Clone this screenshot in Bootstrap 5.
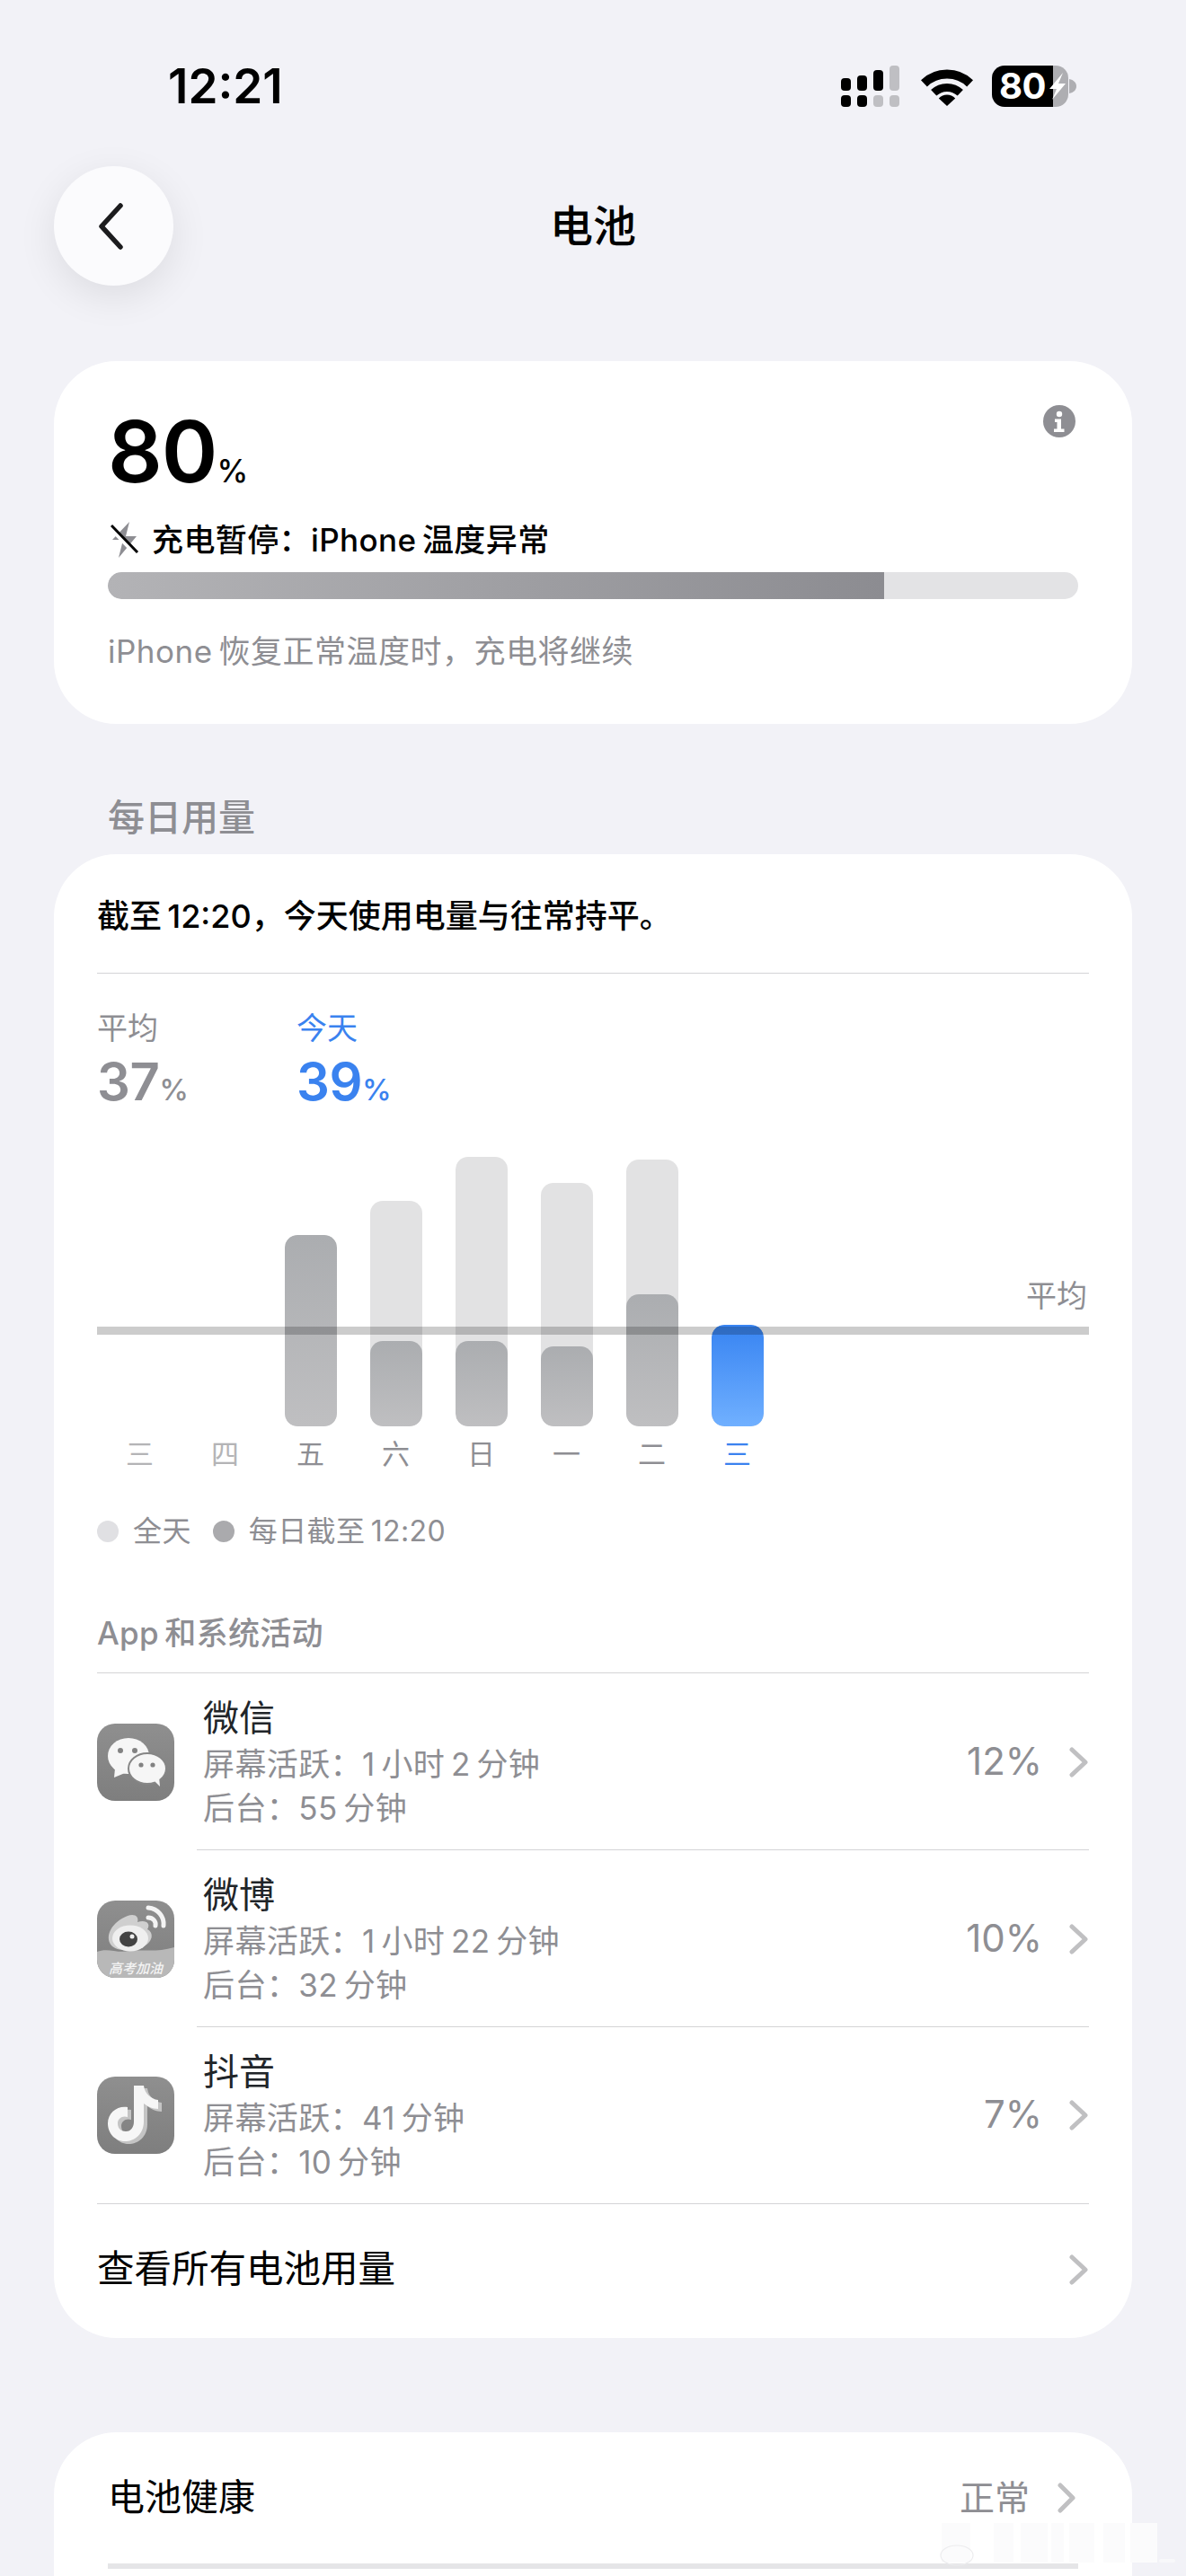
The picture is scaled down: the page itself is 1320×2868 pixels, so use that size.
<!doctype html>
<html lang="zh">
<head>
<meta charset="utf-8">
<title>电池</title>
<link href="https://cdn.jsdelivr.net/npm/bootstrap@5.3.0/dist/css/bootstrap.min.css" rel="stylesheet">
<style>
html,body{height:2868px;overflow:hidden}
body{background:#f2f2f7;color:#000;font-family:"Inter","Noto Sans CJK SC",sans-serif;font-size:34px;position:relative}
.page{padding:0 60px}
.gr{color:#8e8e93}
.status-row{height:185px;margin:0 -60px;padding:73px 122px 0 187px}
.clock{font-size:53px;font-weight:600;line-height:46px}
.sig{flex:none;display:block}
.wifi{flex:none;display:block;margin:2px 21px 0 23px}
.batt{width:85px;height:46px;border-radius:14px;background:linear-gradient(90deg,#000 80%,#aeaeb2 80%);color:#fff;font-size:40px;font-weight:700;line-height:46px;padding-left:8px;letter-spacing:-.5px}
.batt svg{margin-left:4px;flex:none}
.nub{margin-left:1px}
.navbar-row{display:grid;grid-template-columns:133px 1fr 133px;align-items:center;height:133px;margin-bottom:84px}
.back{width:133px;height:133px;border-radius:50%;background:#fbfbfd;box-shadow:0 12px 44px rgba(0,0,0,.09);border:0;padding:0}
.back svg{margin-left:47px}
.ttl{font-size:48px;font-weight:500;line-height:1;text-align:center;margin:0}
.sheet{--bs-card-border-radius:70px;--bs-card-inner-border-radius:70px;--bs-card-border-width:0;--bs-card-bg:#fff;--bs-card-border-color:transparent}
.s1{height:404px;padding:53px 60px 0}
.big{font-size:95px;font-weight:600;line-height:95px;letter-spacing:-1px}
.big small{font-size:35px;font-weight:500;letter-spacing:0}
.info{display:block;flex:none;margin:-4px 3px 0 0}
.chg{height:44px;margin-top:7px;font-size:35px;font-weight:500;line-height:44px;gap:14px;letter-spacing:.4px}
.chg svg{display:block;flex:none;margin-left:3px}
.trk{height:30px;margin-top:14px;--bs-progress-bg:#e3e3e5;--bs-progress-border-radius:15px}
.trk .progress-bar{width:80%;background:linear-gradient(90deg,#b3b3b6,#8c8c91);border-radius:15px 0 0 15px}
.hint{font-size:35px;line-height:44px;margin-top:36px;letter-spacing:.5px}
.sec{font-size:41px;font-weight:500;line-height:50px;margin:79px 0 0 60px;height:66px}
.s2{height:1652px;padding:0 48px}
.sum{height:133px;font-size:36px;font-weight:500;line-height:1;border-bottom:1.5px solid #d4d4d6;padding-top:6px}
.stats{padding-top:40px;height:204px}
.stat{width:222px}
.stat .lb{font-size:34px;line-height:42px}
.stat .vl{font-size:58px;font-weight:600;line-height:62px;margin-top:7px;letter-spacing:-.5px}
.stat .vl small{font-size:33px;font-weight:500}
.bl{color:#3a82ef}
.plot{height:300px}
.pcol{width:95px}
.pill{width:58px;border-radius:14px;background:#e2e2e3;overflow:hidden}
.pill .fillb{border-radius:14px;background:linear-gradient(#abadb0,#bfbfc1)}
.pill .fillb.bl2{background:linear-gradient(#3884f2,#70b0ff)}
.avgline{position:absolute;left:0;right:0;top:189px;height:9px;background:rgba(0,0,0,.2)}
.avglb{position:absolute;right:2px;top:135px;font-size:34px;line-height:40px}
.days{height:60px;font-size:31px;line-height:60px;padding-top:1px}
.days>div{width:95px;text-align:center}
.li{color:#b4b4b6}
.legend{margin-top:35px;height:44px;font-size:32px;line-height:44px;letter-spacing:.4px}
.dot{width:24px;height:24px;border-radius:50%;margin-right:16px}
.d1{background:#e0e0e3}.d2{background:#aaaaad;margin-left:24px}
.apph{font-size:35px;font-weight:500;line-height:44px;margin-top:69px;padding-bottom:22px;border-bottom:1.5px solid #d4d4d6;letter-spacing:.3px}
.aplist{--bs-list-group-bg:transparent;--bs-list-group-border-width:0;--bs-list-group-item-padding-x:0;--bs-list-group-item-padding-y:0}
.aprow{height:197px;border-bottom:1.5px solid #d4d4d6!important;position:relative}
.aprow.ind{border-bottom:0!important}
.aprow.ind::after{content:"";position:absolute;left:111px;right:0;bottom:0;border-bottom:1.5px solid #d4d4d6}
.ic{width:86px;height:86px;flex:none;margin-right:32px;display:block}
.txts{padding-top:4px}
.nm{font-size:40px;line-height:48px;margin-bottom:3px}
.sb{font-size:35px;line-height:49px;letter-spacing:.4px}
.pct{font-size:42px;line-height:1;margin-right:30px;margin-bottom:2px}
.chev{flex:none;display:block}
.allrow{height:145px;font-size:41.500px}
.s3{height:400px;margin-top:105px;padding:0 60px}
.hrow{height:152px;font-size:41px;border-bottom:6px solid #e5e5e7;padding-right:3px}
.hrow .st{font-size:39px;margin-right:31px}
.wm{position:absolute;left:1040px;top:2805px;pointer-events:none}
</style>
</head>
<body>
<div class="page">
  <div class="status-row d-flex justify-content-between">
    <div class="clock">12:21</div>
    <div class="d-flex align-items-start">
      <svg width="66" height="46" viewBox="0 0 66 46" class="sig">
        <g fill="#000"><rect x="0" y="14" width="11" height="14" rx="4"/><rect x="18" y="11" width="11" height="17" rx="4"/><rect x="36" y="5" width="11" height="23" rx="4"/><rect x="0" y="33" width="11" height="13" rx="4"/><rect x="18" y="33" width="11" height="13" rx="4"/></g>
        <g fill="#bfbfc3"><rect x="54" y="0" width="11" height="28" rx="4"/><rect x="36" y="33" width="11" height="13" rx="4"/><rect x="54" y="33" width="11" height="13" rx="4"/></g>
      </svg>
      <svg width="58" height="46" viewBox="0 0 58 46" class="wifi">
        <path d="M29 43 19.8 34.4A13 13 0 0 1 38.2 34.4Z" fill="#000"/>
        <path d="M14.2 28.3A21.5 21.5 0 0 1 43.8 28.3" fill="none" stroke="#000" stroke-width="9"/>
        <path d="M3.4 17.9A37 37 0 0 1 54.6 17.9" fill="none" stroke="#000" stroke-width="10"/>
      </svg>
      <div class="d-flex align-items-center">
        <div class="batt d-flex align-items-center">80<svg width="18" height="30" viewBox="0 0 18 30"><path d="M15 0 0 18H8L3 30 18 12H10Z" fill="#fff"/></svg></div>
        <svg width="8" height="16" viewBox="0 0 8 16" class="nub"><path d="M0 0C5 1 8 4 8 8S5 15 0 16Z" fill="#aeaeb2"/></svg>
      </div>
    </div>
  </div>

  <div class="navbar-row">
    <button class="back d-flex align-items-center" type="button" aria-label="返回">
      <svg width="32" height="52" viewBox="0 0 32 52" class="chev"><path d="M27 3 6 26 27 49" fill="none" stroke="#1c1c1e" stroke-width="5.5" stroke-linecap="round" stroke-linejoin="round"/></svg>
    </button>
    <h1 class="ttl">电池</h1>
    <div></div>
  </div>

  <section class="card sheet s1">
    <div class="d-flex justify-content-between align-items-start">
      <div class="big">80<small>%</small></div>
      <svg width="36" height="36" viewBox="0 0 36 36" class="info"><circle cx="18" cy="18" r="18" fill="#8e8e93"/><circle cx="18" cy="10" r="3.2" fill="#fff"/><path d="M13 15.5h7v11h3.5v3.5H12v-3.5h3.5v-7.500H13Z" fill="#fff"/></svg>
    </div>
    <div class="chg d-flex align-items-center">
      <svg width="32" height="42" viewBox="13 12 32 42"><path d="M34 13 15 33H27L22 53 42 29H30Z" fill="#8e8e93"/><path d="M13 19 42 49" stroke="#fff" stroke-width="6"/><path d="M14 17 43 47" stroke="#000" stroke-width="3"/></svg>
      <span>充电暂停：iPhone&#8201;温度异常</span>
    </div>
    <div class="progress trk" role="progressbar" aria-valuenow="80" aria-valuemin="0" aria-valuemax="100"><div class="progress-bar"></div></div>
    <div class="hint gr">iPhone&#8201;恢复正常温度时，充电将继续</div>
  </section>

  <h2 class="sec gr">每日用量</h2>

  <section class="card sheet s2">
    <div class="sum d-flex align-items-center">截至&#8201;12:20，今天使用电量与往常持平。</div>
    <div class="stats d-flex">
      <div class="stat gr"><div class="lb">平均</div><div class="vl">37<small>%</small></div></div>
      <div class="stat bl"><div class="lb">今天</div><div class="vl">39<small>%</small></div></div>
    </div>
    <div class="plot position-relative d-flex align-items-end">
      <div class="pcol"></div><div class="pcol"></div>
      <div class="pcol d-flex justify-content-center"><div class="pill d-flex flex-column justify-content-end" style="height:213px"><div class="fillb" style="height:213px"></div></div></div>
      <div class="pcol d-flex justify-content-center"><div class="pill d-flex flex-column justify-content-end" style="height:251px"><div class="fillb" style="height:95px"></div></div></div>
      <div class="pcol d-flex justify-content-center"><div class="pill d-flex flex-column justify-content-end" style="height:300px"><div class="fillb" style="height:95px"></div></div></div>
      <div class="pcol d-flex justify-content-center"><div class="pill d-flex flex-column justify-content-end" style="height:271px"><div class="fillb" style="height:89px"></div></div></div>
      <div class="pcol d-flex justify-content-center"><div class="pill d-flex flex-column justify-content-end" style="height:297px"><div class="fillb" style="height:147px"></div></div></div>
      <div class="pcol d-flex justify-content-center"><div class="pill d-flex flex-column justify-content-end" style="height:113px"><div class="fillb bl2" style="height:113px"></div></div></div>
      <div class="avgline"></div>
      <div class="avglb gr">平均</div>
    </div>
    <div class="days d-flex">
      <div class="li">三</div><div class="li">四</div><div class="gr">五</div><div class="gr">六</div><div class="gr">日</div><div class="gr">一</div><div class="gr">二</div><div class="bl">三</div>
    </div>
    <div class="legend d-flex align-items-center gr">
      <span class="dot d1"></span><span>全天</span><span class="dot d2"></span><span>每日截至&#8201;12:20</span>
    </div>
    <div class="apph gr">App&#8201;和系统活动</div>
    <div class="list-group list-group-flush aplist">
      <div class="list-group-item aprow ind d-flex align-items-center">
        <svg class="ic" viewBox="0 0 86 86"><defs><linearGradient id="g1" x1="0" y1="0" x2="0" y2="1"><stop offset="0" stop-color="#8f8f8f"/><stop offset="1" stop-color="#7e7e7e"/></linearGradient></defs><rect width="86" height="86" rx="20" fill="url(#g1)"/><ellipse cx="35" cy="36" rx="23" ry="20" fill="#f6f6f6"/><path d="M20 50l-1 10 12-5Z" fill="#f6f6f6"/><ellipse cx="56" cy="50" rx="21" ry="17" fill="#f6f6f6" stroke="#868686" stroke-width="2"/><path d="M63 63l7 7-1-11Z" fill="#f6f6f6"/><circle cx="26" cy="30" r="3" fill="#828282"/><circle cx="42" cy="30" r="3" fill="#828282"/><circle cx="49" cy="46" r="2.6" fill="#828282"/><circle cx="62" cy="46" r="2.6" fill="#828282"/></svg>
        <div class="flex-grow-1 txts"><div class="nm">微信</div><div class="sb gr">屏幕活跃：1&#8201;小时&#8201;2&#8201;分钟</div><div class="sb gr">后台：55&#8201;分钟</div></div>
        <div class="pct gr">12%</div>
        <svg width="22" height="34" viewBox="0 0 22 34" class="chev"><path d="M3 3 18 17 3 31" fill="none" stroke="#c0c0c2" stroke-width="5" stroke-linecap="round" stroke-linejoin="round"/></svg>
      </div>
      <div class="list-group-item aprow ind d-flex align-items-center">
        <svg class="ic" viewBox="0 0 86 86"><rect width="86" height="86" rx="20" fill="url(#g1)"/><path d="M0 57C12 52 22 59 36 56 50 54 66 58 86 52V66A20 20 0 0 1 66 86H20A20 20 0 0 1 0 66Z" fill="#b8b8b8"/><path d="M16 50C8 40 16 24 34 17 42 14 47 18 45 24 55 21 60 26 56 32 64 36 62 47 50 52 36 57 22 56 16 50Z" fill="#cfcfcf"/><ellipse cx="37" cy="42" rx="20" ry="14.500" fill="#efefef"/><ellipse cx="35" cy="43" rx="10" ry="8.500" fill="#444"/><circle cx="39" cy="40" r="2.500" fill="#eee"/><path d="M57 8C68 9 75 18 74 28M57 19C62 19 66 23 65 28" fill="none" stroke="#f4f4f4" stroke-width="5" stroke-linecap="round"/><text x="43" y="81" text-anchor="middle" font-family="Noto Sans CJK SC,sans-serif" font-size="15" font-weight="500" font-style="italic" fill="#f4f4f4">高考加油</text></svg>
        <div class="flex-grow-1 txts"><div class="nm">微博</div><div class="sb gr">屏幕活跃：1&#8201;小时&#8201;22&#8201;分钟</div><div class="sb gr">后台：32&#8201;分钟</div></div>
        <div class="pct gr">10%</div>
        <svg width="22" height="34" viewBox="0 0 22 34" class="chev"><path d="M3 3 18 17 3 31" fill="none" stroke="#c0c0c2" stroke-width="5" stroke-linecap="round" stroke-linejoin="round"/></svg>
      </div>
      <div class="list-group-item aprow d-flex align-items-center">
        <svg class="ic" viewBox="0 0 86 86"><rect width="86" height="86" rx="20" fill="url(#g1)"/><defs><path id="nt" d="M41 10H52C53 19 60 25 68 26V36C62 36 56 33 52 30V50C52 64 42 72 31 72 20 72 12 63 12 52 12 40 23 32 34 34V45C28 43 23 47 23 52 23 58 27 61 32 61 38 61 41 56 41 50Z"/></defs><use href="#nt" x="4" y="3" fill="#c4c4c4"/><use href="#nt" fill="#f6f6f6"/></svg>
        <div class="flex-grow-1 txts"><div class="nm">抖音</div><div class="sb gr">屏幕活跃：41&#8201;分钟</div><div class="sb gr">后台：10&#8201;分钟</div></div>
        <div class="pct gr">7%</div>
        <svg width="22" height="34" viewBox="0 0 22 34" class="chev"><path d="M3 3 18 17 3 31" fill="none" stroke="#c0c0c2" stroke-width="5" stroke-linecap="round" stroke-linejoin="round"/></svg>
      </div>
    </div>
    <div class="allrow d-flex align-items-center justify-content-between">
      <span>查看所有电池用量</span>
      <svg width="22" height="34" viewBox="0 0 22 34" class="chev"><path d="M3 3 18 17 3 31" fill="none" stroke="#c0c0c2" stroke-width="5" stroke-linecap="round" stroke-linejoin="round"/></svg>
    </div>
  </section>

  <section class="card sheet s3">
    <div class="hrow d-flex align-items-center">
      <span class="flex-grow-1">电池健康</span>
      <span class="st gr">正常</span>
      <svg width="20" height="34" viewBox="0 0 20 34" class="chev"><path d="M3 3 17 17 3 31" fill="none" stroke="#c0c0c2" stroke-width="5" stroke-linecap="round" stroke-linejoin="round"/></svg>
    </div>
  </section>
</div>
<svg class="wm" width="280" height="56" viewBox="0 0 280 56" aria-hidden="true">
  <g fill="#fbfbfc"><rect x="8" y="4" width="32" height="44"/><rect x="66" y="4" width="22" height="44"/><rect x="96" y="4" width="30" height="44"/><rect x="130" y="4" width="14" height="44"/><rect x="150" y="4" width="28" height="44"/><rect x="188" y="4" width="24" height="44"/><rect x="218" y="4" width="30" height="44"/></g>
  <ellipse cx="25" cy="40" rx="18" ry="11" fill="none" stroke="#ececee" stroke-width="1.2"/>
  <rect x="250" y="44" width="18" height="4" rx="2" fill="#f8f8fa"/>
</svg>
</body>
</html>
